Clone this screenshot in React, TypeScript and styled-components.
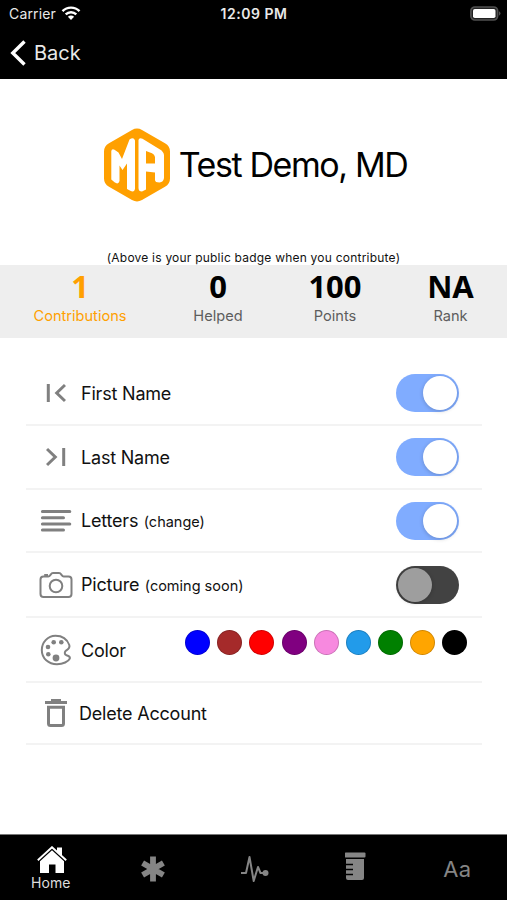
import React, { useState } from 'react';
import styled, { createGlobalStyle } from 'styled-components';

const GlobalStyle = createGlobalStyle`
  * { box-sizing: border-box; }
  body {
    margin: 0;
    background: #fff;
    font-family: Inter, "Liberation Sans", sans-serif;
    color: #111;
  }
`;

const Screen = styled.div`
  width: 507px;
  height: 900px;
  display: flex;
  flex-direction: column;
  overflow: hidden;
  background: #fff;
`;

const Header = styled.header`
  height: 79px;
  flex: none;
  background: #000;
  color: #e9e9e9;
`;

const StatusBar = styled.div`
  height: 27px;
  display: grid;
  grid-template-columns: 1fr auto 1fr;
  align-items: center;
  padding: 0 6px 0 9px;
`;

const Carrier = styled.div`
  display: flex;
  align-items: center;
  gap: 5px;
  font-size: 14px;
  line-height: 20px;
  letter-spacing: 0.15px;
`;

const Clock = styled.div`
  margin-right: 2px;
  font-size: 14px;
  line-height: 20px;
  font-weight: 600;
  letter-spacing: 0.5px;
`;

const BatterySlot = styled.div`
  display: flex;
  justify-content: flex-end;
`;

const BackButton = styled.button`
  display: flex;
  align-items: center;
  gap: 8px;
  height: 50px;
  padding: 1px 0 0 10px;
  border: 0;
  background: none;
  color: inherit;
  font-family: inherit;
  font-size: 20px;
`;

const Badge = styled.section`
  height: 186px;
  flex: none;
  display: flex;
  flex-direction: column;
  align-items: center;
  padding-top: 48px;
`;

const BadgeTitle = styled.div`
  display: flex;
  align-items: center;
  gap: 9px;
  height: 76px;
  padding: 1px 0 0 4px;
`;

const UserName = styled.h1`
  margin: 0;
  font-size: 34px;
  line-height: 44px;
  font-weight: 400;
  letter-spacing: -1.4px;
  color: #000;
  white-space: nowrap;
`;

const BadgeNote = styled.p`
  margin: 48px 0 0;
  font-size: 12px;
  line-height: 16px;
  letter-spacing: 0.22px;
  white-space: nowrap;
`;

const Stats = styled.section`
  height: 73px;
  flex: none;
  display: grid;
  grid-template-columns: 160px 116px 118px 113px;
  background: #eee;
`;

const Stat = styled.div<{ $active?: boolean }>`
  display: flex;
  flex-direction: column;
  align-items: center;
  color: ${(p) => (p.$active ? '#ffa000' : '#5d5d5d')};
`;

const StatValue = styled.strong<{ $active?: boolean }>`
  margin-top: 2px;
  font-family: "Noto Sans", "Open Sans", sans-serif;
  font-size: 31px;
  line-height: 39px;
  font-weight: 700;
  color: ${(p) => (p.$active ? '#ffa000' : '#000')};
`;

const StatLabel = styled.span`
  margin-top: 1px;
  font-size: 14.6px;
  line-height: 18px;
`;

const Settings = styled.main`
  flex: 1;
  padding: 24px 25px 0 26px;
`;

const Row = styled.div<{ $height: number }>`
  height: ${(p) => p.$height}px;
  display: grid;
  grid-template-columns: 55px 1fr auto;
  align-items: center;
  border-bottom: 2px solid #f3f3f3;
`;

const IconSlot = styled.div`
  width: 60px;
  display: flex;
  justify-content: center;
  color: #808080;
`;

const RowLabel = styled.div<{ $outdent?: boolean }>`
  display: flex;
  align-items: baseline;
  gap: 5.5px;
  margin-left: ${(p) => (p.$outdent ? '-2px' : '0')};
  padding-top: 2px;
  font-size: 18px;
  line-height: 24px;
  letter-spacing: -0.2px;
  white-space: nowrap;
`;

const Hint = styled.small`
  font-size: 14.5px;
  letter-spacing: 0;
`;

const Toggle = styled.button<{ $on: boolean }>`
  display: flex;
  justify-content: ${(p) => (p.$on ? 'flex-end' : 'flex-start')};
  align-items: center;
  width: 63px;
  height: 38px;
  margin-right: 23.5px;
  padding: 2px;
  border: 0;
  border-radius: 19px;
  background: ${(p) => (p.$on ? '#80acff' : '#424242')};
`;

const Knob = styled.span<{ $on: boolean }>`
  width: 34px;
  height: 34px;
  border-radius: 50%;
  background: ${(p) => (p.$on ? '#fff' : '#9e9e9e')};
  box-shadow: 0 1px 4px rgba(0, 0, 0, 0.2);
`;

const Swatches = styled.div`
  display: flex;
  gap: 7.1px;
  margin: 0 15px 14px 0;
`;

const Swatch = styled.button<{ $color: string }>`
  width: 25px;
  height: 25px;
  padding: 0;
  border: 1px solid rgba(0, 0, 0, 0.18);
  border-radius: 50%;
  background: ${(p) => p.$color};
`;

const TabBar = styled.nav`
  height: 66px;
  flex: none;
  display: grid;
  grid-template-columns: repeat(5, 1fr);
  border-top: 1px solid #777;
  background: #000;
`;

const Tab = styled.button<{ $active?: boolean; $lift?: number }>`
  display: flex;
  flex-direction: column;
  align-items: center;
  justify-content: ${(p) => (p.$active ? 'flex-start' : 'center')};
  padding: ${(p) => (p.$active ? '11px 0 0' : `3px 0 ${p.$lift ?? 0}px 2px`)};
  border: 0;
  background: none;
  color: ${(p) => (p.$active ? '#fff' : '#858585')};
  font-family: inherit;
`;

const TabLabel = styled.span`
  font-size: 14px;
  line-height: 18px;
  color: #ddd;
`;

const TypeGlyph = styled.span`
  font-size: 22px;
  line-height: 28px;
  letter-spacing: 0.3px;
`;

const WifiIcon = () => (
  <svg width="20" height="15" viewBox="0 0 20 15" fill="none" stroke="#fff" strokeWidth="2.4">
    <path d="M1.5 5.1C6.2 0.4 13.8 0.4 18.5 5.1" />
    <path d="M4.7 8.4C7.7 5.5 12.3 5.5 15.3 8.4" />
    <path d="M10 14 6.9 10.7C8.7 9.2 11.3 9.2 13.1 10.7Z" fill="#fff" stroke="none" />
  </svg>
);

const BatteryIcon = () => (
  <svg width="31" height="15" viewBox="0 0 31 15">
    <rect x="0.9" y="1" width="26.7" height="13" rx="4" fill="#222" stroke="#505050" strokeWidth="1.7" />
    <rect x="3" y="3" width="22.5" height="9" rx="1.8" fill="#fff" />
    <path d="M29 5.3Q32 7.5 29 9.7Z" fill="#505050" />
  </svg>
);

const BackIcon = () => (
  <svg width="16" height="26" viewBox="0 0 16 26" fill="none" stroke="#fff" strokeWidth="3.4">
    <path d="M14.5 1.5 2.8 13 14.5 24.5" />
  </svg>
);

const LogoIcon = () => (
  <svg width="66" height="74" viewBox="0 0 66 74">
    <path
      d="M28 2Q33-.8 38 2L61 15.2Q66 18 66 23.5V50.5Q66 56 61 58.8L38 72Q33 74.8 28 72L5 58.8Q0 56 0 50.5V23.5Q0 18 5 15.2Z"
      fill="#ffa000"
    />
    <path
      d="M7.3 23Q7.8 20.5 10.5 21.8L14.5 24.5 18 31 25.5 11.5Q29.7 8.7 31 12.5V61Q30 65 26.3 62.8L23 61V35.5L18.5 42 15.5 37.5V53Q14.5 57 10.5 54.3L7.3 51.5Z"
      fill="#fff"
    />
    <path
      d="M34.5 12Q35 9.5 38.5 10.8L56 21.5Q59.500 23.5 60 27V50Q59.5 54 55.5 54.5 51 54.5 51 52V44.5L42 43.5V61.5L38 63.5Q34.5 63.5 34.5 60ZM42 23V35.5H51V29Q50.5 26.5 48 25.2Z"
      fill="#fff"
      fillRule="evenodd"
    />
  </svg>
);

const FirstIcon = () => (
  <svg width="20" height="20" viewBox="0 0 20 20" fill="none" stroke="currentColor" strokeWidth="3">
    <path d="M2.3 1V19M19 2 10.7 10 19 18" />
  </svg>
);

const LastIcon = () => (
  <svg width="20" height="20" viewBox="0 0 20 20" fill="none" stroke="currentColor" strokeWidth="3">
    <path d="M17.7 1V19M1 2 9.3 10 1 18" />
  </svg>
);

const LinesIcon = () => (
  <svg width="32" height="24" viewBox="0 0 32 24" stroke="currentColor" strokeWidth="3" strokeLinecap="round">
    <path d="M2.4 2.5H29.8M2.4 8.7H23.5M2.4 14.9H29.8M2.4 21H23.5" />
  </svg>
);

const CameraIcon = () => (
  <svg width="34" height="28" viewBox="0 0 34 28" fill="none" stroke="currentColor" strokeWidth="2">
    <path d="M4.5 5.5H9.3C11.5 5.5 11.5 2 14 2H20C22.5 2 22.5 5.5 24.7 5.5H29.5Q32.5 5.5 32.5 8.5V23Q32.5 26 29.5 26H4.5Q1.5 26 1.5 23V8.5Q1.5 5.5 4.5 5.5Z" />
    <circle cx="17" cy="15" r="6.3" />
    <path d="M5.2 4H9" />
  </svg>
);

const PaletteIcon = () => (
  <svg width="32" height="32" viewBox="0 0 32 32">
    <path
      d="M29.3 11C27 5 21.5 1.8 15.5 1.8 7.5 1.8 1.8 8.7 1.8 16 1.8 24.5 8.5 30.2 17 30.2 23 30.2 28.5 27.5 29.8 24.7 30.5 22 28 21.8 26.5 21.3 24 20.3 24.4 17.7 26.3 16.4 28.5 15 30.2 14 29.3 11Z"
      fill="none"
      stroke="currentColor"
      strokeWidth="2"
    />
    <circle cx="13.7" cy="8.3" r="2.3" fill="currentColor" />
    <circle cx="21.3" cy="8.3" r="2.3" fill="currentColor" />
    <circle cx="8" cy="13" r="2.3" fill="currentColor" />
    <circle cx="8.3" cy="20.3" r="2.3" fill="currentColor" />
    <circle cx="16" cy="24" r="3.4" fill="currentColor" />
  </svg>
);

const TrashIcon = () => (
  <svg width="22" height="28" viewBox="0 0 22 28" fill="currentColor">
    <path d="M0 2H6V0H16V2H22V5H0Z" />
    <path d="M3.5 8.2H18.5V24.5Q18.5 26.5 16.5 26.5H5.5Q3.5 26.5 3.5 24.5Z" fill="none" stroke="currentColor" strokeWidth="3" />
  </svg>
);

const HomeIcon = () => (
  <svg width="32" height="28" viewBox="-2 0 32 28" fill="#fff">
    <path d="M3 15.2 15 4.3 27 15.2V27H18.5V18.5H12V27H3Z" />
    <path d="M0.8 14.2 15 1.2 29.2 14.2" fill="none" stroke="#fff" strokeWidth="1.9" />
    <path d="M20 1.5H25V10L20 5.5Z" />
  </svg>
);

const AsteriskIcon = () => (
  <svg width="26" height="26" viewBox="0 0 26 26" fill="none" stroke="currentColor" strokeWidth="5.8" strokeLinejoin="round">
    <path d="M13 0.5V25.5M2.6 7 23.4 19M2.6 19 23.4 7" />
  </svg>
);

const PulseIcon = () => (
  <svg width="30" height="28" viewBox="0 0 30 28" fill="none" stroke="currentColor" strokeWidth="2" strokeLinejoin="round">
    <path d="M2 18H7L10.5 2 14.7 26 19 12 21.5 18H26.500" />
    <circle cx="26.5" cy="18" r="3" fill="currentColor" stroke="none" />
  </svg>
);

const BeakerIcon = () => (
  <svg width="22" height="28" viewBox="1 0 22 28" fill="currentColor">
    <rect x="0.8" y="0.5" width="20.700" height="5" rx="1" />
    <path d="M2 7H20V26Q20 28 18 28H4Q2 28 2 26V23.2H9V21.8H2V18.2H9V16.8H2V13.2H9V11.8H2Z" />
  </svg>
);

const stats = [
  { value: '1', label: 'Contributions', active: true },
  { value: '0', label: 'Helped' },
  { value: '100', label: 'Points' },
  { value: 'NA', label: 'Rank' },
];

const options = [
  { label: 'First Name', icon: <FirstIcon />, height: 64 },
  { label: 'Last Name', icon: <LastIcon />, height: 64 },
  { label: 'Letters', hint: '(change)', icon: <LinesIcon />, height: 63 },
  { label: 'Picture', hint: '(coming soon)', icon: <CameraIcon />, height: 65 },
];

const colors = ['#0000ff', '#a52a2a', '#ff0000', '#800080', '#f789df', '#229bea', '#008000', '#ffa500', '#000000'];

export default function App() {
  const [enabled, setEnabled] = useState([true, true, true, false]);
  const flip = (index: number) => setEnabled((all) => all.map((on, i) => (i === index ? !on : on)));

  return (
    <Screen>
      <GlobalStyle />
      <Header>
        <StatusBar>
          <Carrier>Carrier <WifiIcon /></Carrier>
          <Clock>12:09 PM</Clock>
          <BatterySlot><BatteryIcon /></BatterySlot>
        </StatusBar>
        <BackButton><BackIcon />Back</BackButton>
      </Header>
      <Badge>
        <BadgeTitle>
          <LogoIcon />
          <UserName>Test Demo, MD</UserName>
        </BadgeTitle>
        <BadgeNote>(Above is your public badge when you contribute)</BadgeNote>
      </Badge>
      <Stats>
        {stats.map((s) => (
          <Stat key={s.label} $active={s.active}>
            <StatValue $active={s.active}>{s.value}</StatValue>
            <StatLabel>{s.label}</StatLabel>
          </Stat>
        ))}
      </Stats>
      <Settings>
        {options.map((o, i) => (
          <Row key={o.label} $height={o.height}>
            <IconSlot>{o.icon}</IconSlot>
            <RowLabel>{o.label}{o.hint && <Hint>{o.hint}</Hint>}</RowLabel>
            <Toggle $on={enabled[i]} onClick={() => flip(i)} aria-label={o.label}>
              <Knob $on={enabled[i]} />
            </Toggle>
          </Row>
        ))}
        <Row $height={65}>
          <IconSlot><PaletteIcon /></IconSlot>
          <RowLabel>Color</RowLabel>
          <Swatches>
            {colors.map((c) => <Swatch key={c} $color={c} aria-label={c} />)}
          </Swatches>
        </Row>
        <Row $height={62}>
          <IconSlot><TrashIcon /></IconSlot>
          <RowLabel $outdent>Delete Account</RowLabel>
        </Row>
      </Settings>
      <TabBar>
        <Tab $active><HomeIcon /><TabLabel>Home</TabLabel></Tab>
        <Tab><AsteriskIcon /></Tab>
        <Tab><PulseIcon /></Tab>
        <Tab $lift={6}><BeakerIcon /></Tab>
        <Tab><TypeGlyph>Aa</TypeGlyph></Tab>
      </TabBar>
    </Screen>
  );
}
